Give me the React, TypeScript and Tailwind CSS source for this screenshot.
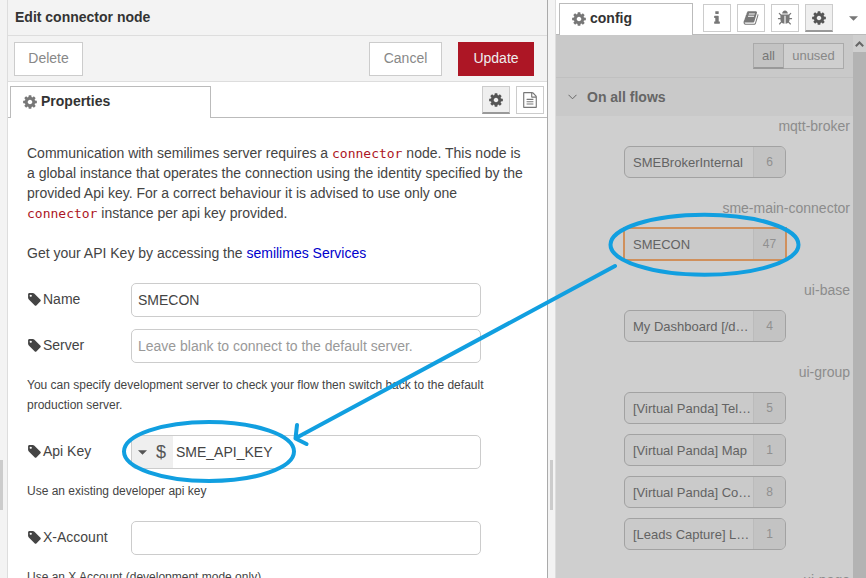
import React from "react";

const paths = {
  cog: "M1152 896q0-106-75-181t-181-75-181 75-75 181 75 181 181 75 181-75 75-181zm512-109v222q0 12-8 23t-20 13l-185 28q-19 54-39 91 35 50 107 138 10 12 10 25t-9 23q-27 37-99 108t-94 71q-12 0-26-9l-138-108q-44 23-91 38-16 136-29 186-7 28-36 28h-222q-14 0-24.500-8.500t-11.500-21.500l-28-184q-49-16-90-37l-141 107q-10 9-25 9-14 0-25-11-126-114-165-168-7-10-7-23 0-12 8-23 15-21 51-66.500t54-70.500q-27-50-41-99l-183-27q-13-2-21-12.500t-8-23.500v-222q0-12 8-23t19-13l186-28q14-46 39-92-40-57-107-138-10-12-10-24 0-10 9-23 26-36 98.500-107.500t94.500-71.500q13 0 26 10l138 107q44-23 91-38 16-136 29-186 7-28 36-28h222q14 0 24.500 8.500t11.500 21.500l28 184q49 16 90 37l142-107q9-9 24-9 13 0 25 10 129 119 165 170 7 8 7 22 0 12-8 23-15 21-51 66.500t-54 70.500q26 50 41 98l183 28q13 2 21 12.500t8 23.500z",
  tag: "M576 448q0-53-37.500-90.500t-90.500-37.500-90.500 37.500-37.500 90.500 37.500 90.500 90.500 37.500 90.500-37.500 37.500-90.500zm1067 576q0 53-37 90l-491 492q-39 37-91 37-53 0-90-37l-715-716q-38-37-64.500-101t-26.500-117v-416q0-52 38-90t90-38h416q53 0 117 26.500t102 64.500l715 714q37 39 37 91z",
  book: "M1703 478q40 57 18 129l-275 906q-19 64-76.500 107.500t-122.500 43.500h-923q-77 0-148.500-53.500t-99.500-131.500q-24-67-2-127 0-4 3-27t4-37q1-8-3-21.500t-3-19.500q2-11 8-21t16.500-23.500 16.500-23.500q23-38 45-91.500t30-91.500q3-10 .5-30t-.5-28q3-11 17-28t17-23q21-36 42-92t25-90q1-9-2.500-32t.5-28q4-13 22-30.500t22-22.500q19-26 42.500-84.500t27.500-96.500q1-8-3-25.500t-2-26.500q2-8 9-18t18-23 17-21q8-12 16.500-30.500t15-35 16-36 19.500-32 26.500-23.500 36-11.500 47.500 5.500l-1 3q38-9 51-9h761q74 0 114 56t18 130l-274 906q-36 119-71.500 153.500t-128.500 34.500h-869q-27 0-38 15-11 16-1 43 24 70 144 70h923q29 0 56-15.500t35-41.500l300-987q7-22 5-57 38 15 59 43zm-1064 2q-4 13 2 22.500t20 9.500h608q13 0 25.500-9.500t16.500-22.500l21-64q4-13-2-22.500t-20-9.500h-608q-13 0-25.500 9.500t-16.500 22.500zm-83 256q-4 13 2 22.500t20 9.500h608q13 0 25.500-9.500t16.500-22.500l21-64q4-13-2-22.500t-20-9.500h-608q-13 0-25.500 9.500t-16.500 22.500z",
  bug: "M1696 960q0 26-19 45t-45 19h-224q0 171-67 290l208 209q19 19 19 45t-19 45q-18 19-45 19t-45-19l-198-197q-5 5-15 13t-42 28.500-65 36.500-82 29-97 13v-896h-128v896q-51 0-101.500-13.500t-87-33-66-39-43.500-32.500l-15-14-183 207q-20 21-48 21-24 0-43-16-19-18-20.500-44.500t15.500-46.500l202-227q-58-114-58-274h-224q-26 0-45-19t-19-45 19-45 45-19h224v-294l-173-173q-19-19-19-45t19-45 45-19 45 19l173 173h844l173-173q19-19 45-19t45 19 19 45-19 45l-173 173v294h224q26 0 45 19t19 45zm-480-576h-640q0-133 93.500-226.500t226.500-93.500 226.500 93.500 93.500 226.500z",
  info: "M1216 1344v128q0 26-19 45t-45 19h-512q-26 0-45-19t-19-45v-128q0-26 19-45t45-19h64v-384h-64q-26 0-45-19t-19-45v-128q0-26 19-45t45-19h384q26 0 45 19t19 45v576h64q26 0 45 19t19 45zm-128-1152v192q0 26-19 45t-45 19h-256q-26 0-45-19t-19-45v-192q0-26 19-45t45-19h256q26 0 45 19t19 45z",
  file: "M1596 380q28 28 48 76t20 88v1152q0 40-28 68t-68 28h-1344q-40 0-68-28t-28-68v-1600q0-40 28-68t68-28h896q40 0 88 20t76 48zm-444-244v376h376q-10-29-22-41l-313-313q-12-12-41-22zm384 1528v-1024h-416q-40 0-68-28t-28-68v-416h-768v1536h1280zm-1024-864q0-14 9-23t23-9h704q14 0 23 9t9 23v64q0 14-9 23t-23 9h-704q-14 0-23-9t-9-23v-64zm736 224q14 0 23 9t9 23v64q0 14-9 23t-23 9h-704q-14 0-23-9t-9-23v-64q0-14 9-23t23-9h704zm0 256q14 0 23 9t9 23v64q0 14-9 23t-23 9h-704q-14 0-23-9t-9-23v-64q0-14 9-23t23-9h704z",
};

function Icon({ name, className = "size-4" }: { name: keyof typeof paths; className?: string }) {
  return (
    <svg viewBox="0 0 1792 1792" fill="currentColor" aria-hidden="true" className={`shrink-0 ${className}`}>
      <path d={paths[name]} />
    </svg>
  );
}

function Caret() {
  return (
    <svg viewBox="0 0 10 5" fill="currentColor" aria-hidden="true" className="h-[5px] w-[9px] shrink-0">
      <path d="M0 0h10L5 5z" />
    </svg>
  );
}

function IconButton({ name, label, active = false }: { name: keyof typeof paths; label: string; active?: boolean }) {
  return (
    <button
      type="button"
      aria-label={label}
      className={`flex size-7 shrink-0 items-center justify-center border border-[#ccc] ${
        active ? "border-b-2 border-b-[#999] bg-[#efefef] text-[#555]" : "bg-white text-[#777]"
      }`}
    >
      <Icon name={name} />
    </button>
  );
}

function Separator({ className }: { className: string }) {
  return (
    <div className={`flex shrink-0 flex-col bg-[#f3f3f3] ${className}`}>
      <div className="h-[460px]" />
      <div className="h-[50px] w-[3px] bg-[#ccc]" />
    </div>
  );
}

const inputStyle =
  "h-[34px] w-[350px] rounded-[5px] border border-[#ccc] bg-white px-[6px] text-[14px] text-[#444] outline-none placeholder:text-[#999]";

function Field({ id, label, children }: { id: string; label: string; children: React.ReactNode }) {
  return (
    <div className="flex">
      <label htmlFor={id} className="flex h-8 w-[104px] shrink-0 items-center gap-px whitespace-nowrap text-[#444]">
        <Icon name="tag" className="size-[15px]" />
        {label}
      </label>
      {children}
    </div>
  );
}

function Code({ children }: { children: React.ReactNode }) {
  return (
    <code className="font-['DejaVu_Sans_Mono',monospace] text-[13px] leading-none text-[#ad1625]">{children}</code>
  );
}

function ConfigNode({ name, users, selected = false }: { name: string; users: number; selected?: boolean }) {
  return (
    <li
      className={`flex h-8 w-[162px] overflow-hidden border bg-[#cacaca] ${
        selected ? "border-[#d0905c] outline outline-[#d0905c]" : "rounded-[6px] border-[#a2a2a2]"
      }`}
    >
      <span className="flex-1 truncate pl-2 text-[13px] leading-8 text-[#636363]">{name}</span>
      <span className="w-8 shrink-0 border-l border-[#bbb] bg-[#c3c3c3] text-center text-[12px] leading-[30px] text-[#909090]">
        {users}
      </span>
    </li>
  );
}

const groups = [
  { type: "mqtt-broker", nodes: [{ name: "SMEBrokerInternal", users: 6 }] },
  { type: "sme-main-connector", nodes: [{ name: "SMECON", users: 47, selected: true }] },
  { type: "ui-base", nodes: [{ name: "My Dashboard [/d…", users: 4 }] },
  {
    type: "ui-group",
    nodes: [
      { name: "[Virtual Panda] Tel…", users: 5 },
      { name: "[Virtual Panda] Map", users: 1 },
      { name: "[Virtual Panda] Co…", users: 8 },
      { name: "[Leads Capture] L…", users: 1 },
    ],
  },
  { type: "ui-page", nodes: [] },
];

function Editor() {
  return (
    <main className="flex min-w-0 flex-1 flex-col border-l border-r border-l-[#ddd] border-r-[#aaa] bg-white">
      <h1 className="h-9 shrink-0 border-b border-[#ddd] bg-[#f3f3f3] pl-[7px] text-[14px] leading-[34px] font-bold text-[#333]">
        Edit connector node
      </h1>
      <div className="flex h-[46px] shrink-0 items-center border-b border-[#ddd] bg-[#f3f3f3] pr-[13px] pl-[6px]">
        <button type="button" className="mr-auto h-[34px] w-[69px] border border-[#ccc] bg-white text-[#888]">
          Delete
        </button>
        <button type="button" className="mr-4 h-[34px] w-[73px] border border-[#ccc] bg-white text-[#888]">
          Cancel
        </button>
        <button type="button" className="h-[34px] w-[76px] bg-[#ad1625] text-[#eee]">
          Update
        </button>
      </div>
      <div className="flex h-9 shrink-0 items-end border-b border-[#bbb] pr-[3px] pl-[2px]">
        <div className="-mb-px mr-auto flex h-8 w-[201px] items-center gap-[3px] border border-b-0 border-[#bbb] bg-white pb-0.5 pl-[11px] font-bold text-[#333]">
          <Icon name="cog" className="size-4 text-[#777]" />
          Properties
        </div>
        <div className="flex gap-[6px] pb-[3px]">
          <IconButton name="cog" label="Properties" active />
          <IconButton name="file" label="Description" />
        </div>
      </div>
      <form className="pt-[25px] pr-5 pl-[19px] leading-5 text-[#444]">
        <p className="mb-5">
          Communication with semilimes server requires a <Code>connector</Code> node. This node is a global instance
          that operates the connection using the identity specified by the provided Api key. For a correct behaviour it
          is advised to use only one <Code>connector</Code> instance per api key provided.
        </p>
        <p className="mb-5">
          Get your API Key by accessing the{" "}
          <a href="#services" className="text-[#0000cc]">
            semilimes Services
          </a>
        </p>
        <div className="mb-3">
          <Field id="name" label="Name">
            <input id="name" className={inputStyle} defaultValue="SMECON" />
          </Field>
        </div>
        <Field id="server" label="Server">
          <input id="server" className={inputStyle} placeholder="Leave blank to connect to the default server." />
        </Field>
        <p className="mt-3 mb-5 text-[12px]">
          You can specify development server to check your flow then switch back to the default production server.
        </p>
        <Field id="api-key" label="Api Key">
          <div className="flex h-[34px] w-[350px] overflow-hidden rounded-[5px] border border-[#ccc] bg-white">
            <button
              type="button"
              aria-label="Value type"
              className="flex w-[41px] shrink-0 items-center gap-[9px] bg-[#efefef] pl-[6px] text-[18px] text-[#555]"
            >
              <Caret />$
            </button>
            <input
              id="api-key"
              className="min-w-0 flex-1 px-[3px] text-[14px] text-[#444] outline-none"
              defaultValue="SME_API_KEY"
            />
          </div>
        </Field>
        <p className="mt-3 mb-5 text-[12px]">Use an existing developer api key</p>
        <Field id="x-account" label="X-Account">
          <input id="x-account" className={inputStyle} />
        </Field>
        <p className="mt-3 text-[12px]">Use an X Account (development mode only)</p>
      </form>
    </main>
  );
}

function Sidebar() {
  return (
    <aside className="flex w-[310px] shrink-0 flex-col bg-white">
      <div className="flex h-[35px] shrink-0 items-end border-b border-[#bbb] pl-[3px] pr-2">
        <div className="-mb-px mr-[10px] flex h-8 w-[134px] shrink-0 items-center gap-[3px] border border-b-0 border-[#bbb] bg-white pb-0.5 pl-[11px] font-bold text-[#333]">
          <Icon name="cog" className="size-4 text-[#777]" />
          config
        </div>
        <div className="flex gap-[6px] pb-[2px]">
          <IconButton name="info" label="Information" />
          <IconButton name="book" label="Help" />
          <IconButton name="bug" label="Debug" />
          <IconButton name="cog" label="Configuration" active />
        </div>
        <button type="button" aria-label="More tabs" className="ml-auto flex h-8 items-center text-[#777]">
          <Caret />
        </button>
      </div>
      <div className="flex min-h-0 flex-1 overflow-hidden">
        <div className="min-w-0 flex-1 bg-[#cfcfcf]">
          <div className="flex h-[43px] items-center justify-end border-b border-[#c0c0c0] bg-[#c9c9c9] pr-[9px] text-[13px] text-[#888]">
            <button
              type="button"
              className="h-[26px] w-[31px] border border-b-2 border-[#aaa] border-b-[#999] bg-[#c3c3c3] text-[#777]"
            >
              all
            </button>
            <button type="button" className="h-[26px] w-[60px] border border-l-0 border-[#aaa] bg-[#cfcfcf]">
              unused
            </button>
          </div>
          <h2 className="flex h-[38px] items-center gap-[10px] bg-[#c9c9c9] pl-3 font-bold text-[#666]">
            <svg viewBox="0 0 9 6" fill="none" stroke="currentColor" aria-hidden="true" className="h-[6px] w-[9px]">
              <path d="M.5.8l4 4 4-4" />
            </svg>
            On all flows
          </h2>
          {groups.map((group) => (
            <section key={group.type} className="flex flex-col pr-[3px] pb-5">
              <h3 className="mb-[10px] text-right leading-5 text-[#8c8c8c]">{group.type}</h3>
              <ul className="flex flex-col gap-[10px] pl-[68px]">
                {group.nodes.map((node) => (
                  <ConfigNode key={node.name} {...node} />
                ))}
              </ul>
            </section>
          ))}
        </div>
        <div className="flex w-[13px] shrink-0 flex-col bg-[#b3b3b3]">
          <div className="flex h-[17px] items-center justify-center bg-[#cfcfcf] text-[#666]">
            <svg
              viewBox="0 0 9 6"
              fill="none"
              stroke="currentColor"
              strokeWidth="2"
              aria-hidden="true"
              className="h-[6px] w-[9px]"
            >
              <path d="M.8 5.200l3.700-3.700 3.700 3.700" />
            </svg>
          </div>
        </div>
      </div>
    </aside>
  );
}

function Annotations() {
  return (
    <svg
      width="866"
      height="578"
      viewBox="0 0 866 578"
      fill="none"
      stroke="#119fe0"
      strokeWidth="4"
      strokeLinecap="round"
      strokeLinejoin="round"
      aria-hidden="true"
      className="pointer-events-none absolute top-0 left-0"
    >
      <ellipse cx="704.500" cy="244.700" rx="94" ry="30" />
      <ellipse cx="209" cy="451.500" rx="85" ry="29.500" />
      <path d="M615 266L296 438M297 425l-1.500 13.500L306.500 444" />
    </svg>
  );
}

export default function App() {
  return (
    <div className="relative flex h-screen overflow-hidden bg-white font-['Liberation_Sans',Arial,sans-serif] text-[14px]">
      <Separator className="w-[7px]" />
      <Editor />
      <Separator className="w-2 border-r border-[#ddd] pl-[2px]" />
      <Sidebar />
      <Annotations />
    </div>
  );
}
